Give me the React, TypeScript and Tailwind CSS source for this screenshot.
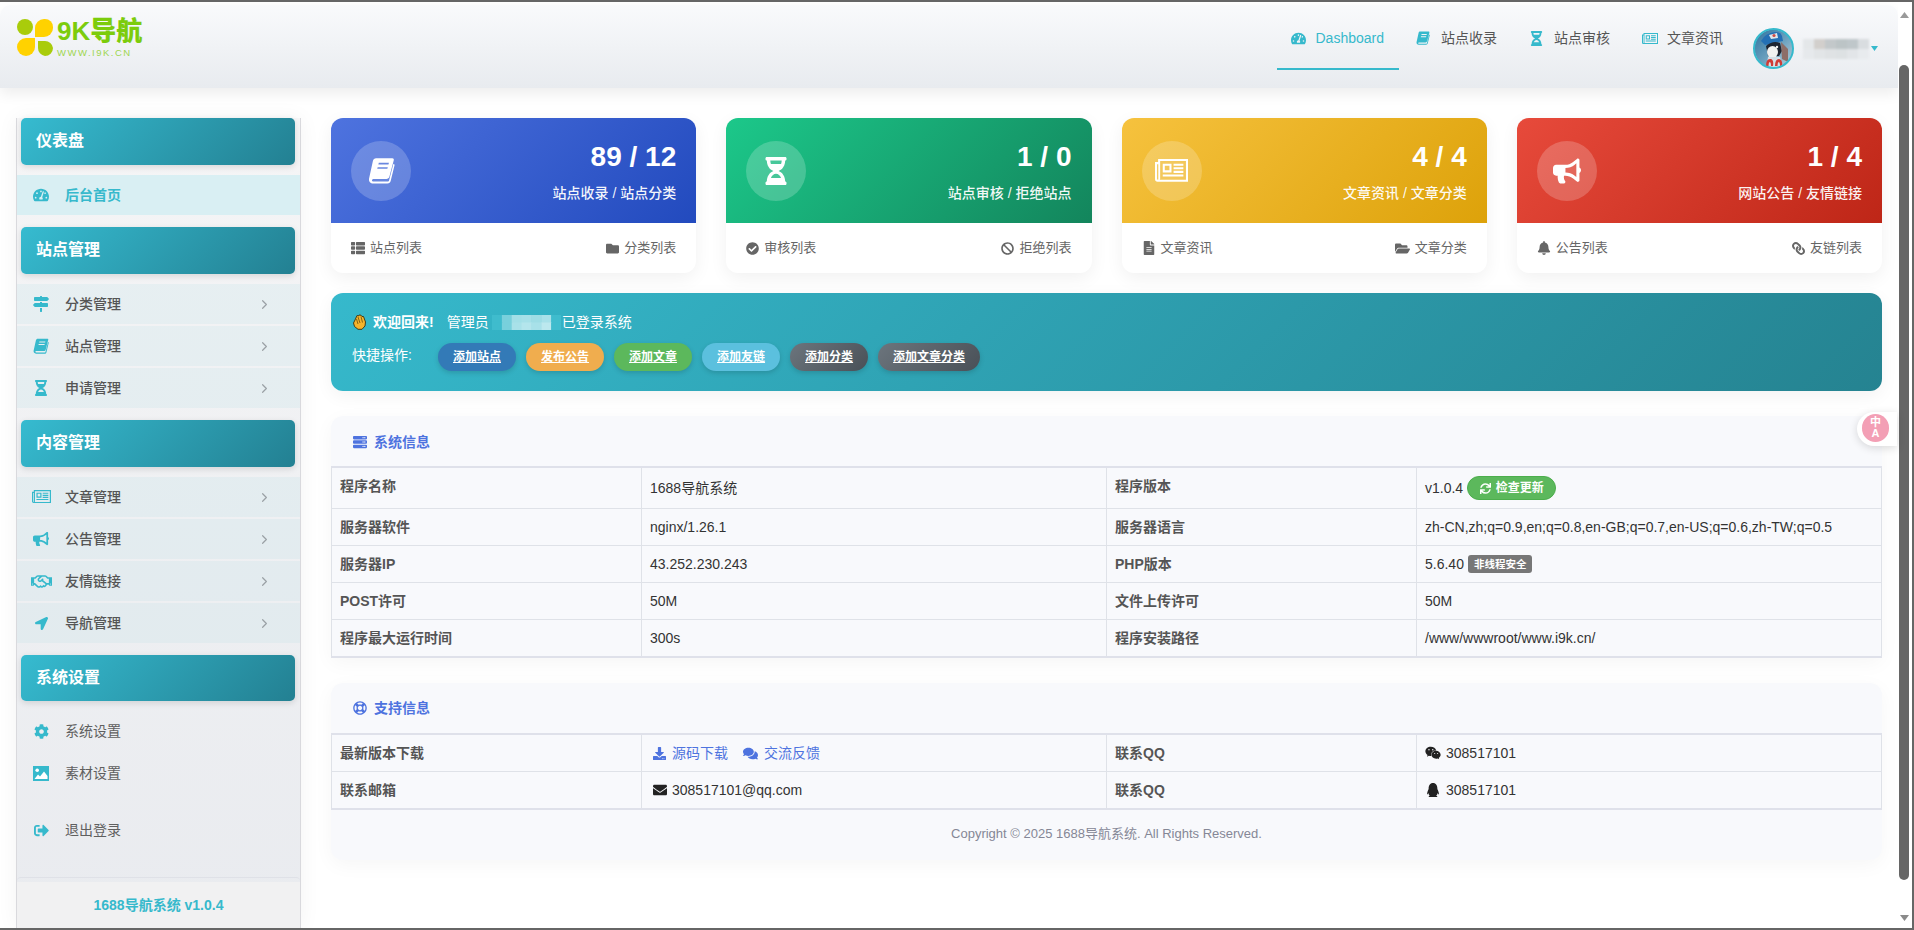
import React from "react";
import { ChevronRight } from "lucide-react";
import {
  FaTachometerAlt, FaMapSigns, FaHourglassHalf, FaBullhorn, FaRegHandshake, FaLocationArrow, FaCog,
  FaSignOutAlt, FaThList, FaFolder, FaCheckCircle, FaBan, FaFileAlt, FaFolderOpen, FaBell, FaLink, FaServer, FaRegLifeRing, FaSync,
  FaDownload, FaComments, FaEnvelope, FaWeixin, FaQq,
} from "react-icons/fa";

const Book = ({ size = 14, className = "" }: { size?: number; className?: string }) => (
  <svg viewBox="0 0 24 24" width={size} height={size} className={className} fill="currentColor" fillRule="evenodd">
    <path d="M7.2 1H21.6c1 0 1.6.8 1.3 1.8L19 17.6c-.4 1.3-1.3 1.9-2.6 1.9H5.4c-1.3 0-1.9.6-1.9 1.2 0 .7.6 1.1 1.6 1.1h12.4c.7 0 1-.2 1.2-.9L22.6 6l1.1.8-3.5 14.4c-.4 1.6-1.4 2.3-2.9 2.3H4.6C2.3 23.5.5 21.8.9 19.3L4.4 3.4C4.8 1.8 5.7 1 7.2 1ZM9.6 5.2l-.4 1.5h9l.4-1.5ZM8.6 9l-.4 1.5h9l.4-1.5Z" />
  </svg>
);

const News = ({ w = 16 }: { w?: number }) => (
  <svg viewBox="0 0 32 22" width={w} height={(w * 22) / 32} fill="currentColor" fillRule="evenodd">
    <path d="M3 0H32V22H2.5A2.5 2.5 0 0 1 0 19.5V3H3ZM5 2V19.5A1.5 1.5 0 0 1 4.6 20H30V2ZM2 5V19.5a.8.8 0 0 0 1.2.4V5ZM7.5 4.5H16V13H7.5ZM9.5 6.5V11H14V6.5ZM18 4.5H27.5V6.5H18ZM18 8H27.5V10H18ZM18 11.5H27.5V13.5H18ZM7.5 15H27.5V17H7.5Z" />
  </svg>
);

const Picture = () => (
  <svg viewBox="0 0 16 15" width={16} height={15}>
    <rect width="16" height="15" fill="#36b9cc" />
    <circle cx="4.2" cy="4.2" r="1.8" fill="#ffffff" />
    <path d="M1.5 13 L5 8.5 L7 10.5 L11 5.5 L14.5 10 V13 Z" fill="#ffffff" />
  </svg>
);

const Hand = () => (
  <svg viewBox="0 0 15 16" width={15} height={16} className="mr-[6px] shrink-0">
    <path d="M3 6 L5 1.5 L6.5 2 L7 1 L9 1.2 L10 2.5 L11.5 2.5 L13.5 8 L13 12 L10 15.3 L6 15.3 L2.5 12.5 L1.5 9 Z" fill="#f6b42c" stroke="#3d300c" strokeWidth="0.9" strokeLinejoin="round" />
    <path d="M6 3 L8 9 M9 2.6 L10.5 8.5 M4.5 5 L6 10" stroke="#6a4e0c" strokeWidth="0.8" fill="none" />
  </svg>
);

const Logo = () => (
  <div className="ml-[17px] mt-[14px] flex">
    <svg viewBox="0 0 36 37" width={36} height={37} className="shrink-0">
      <circle cx="8" cy="8" r="8" fill="#a9cc0b" />
      <path d="M18 9 a9 9 0 0 1 9-9 h1 a8 8 0 0 1 8 8 v1 a9 9 0 0 1-9 9 h-9 Z" fill="#ffd200" />
      <path d="M18 19 h-9 a9 9 0 0 0-9 9 a9 9 0 0 0 9 9 a9 9 0 0 0 9-9 Z" fill="#ffd200" />
      <path d="M21 22 h7 a8 8 0 0 1 8 7 a8 8 0 0 1-8 8 a8 8 0 0 1-7-8 Z" fill="#a9cc0b" />
    </svg>
    <div className="ml-[4px] -mt-[2px]">
      <div className="text-[26px] leading-[28px] font-black text-[#7ccc0c] whitespace-nowrap">9K导航</div>
      <div className="text-[9.5px] leading-[9px] mt-[3px] tracking-[1.5px] font-medium text-[#9ed650] whitespace-nowrap">WWW.I9K.CN</div>
    </div>
  </div>
);

const Avatar = () => (
  <svg viewBox="0 0 41 41" width={41} height={41} className="shrink-0">
    <defs>
      <clipPath id="av"><circle cx="20.5" cy="20.5" r="19" /></clipPath>
      <linearGradient id="avbg" x1="0" y1="0" x2="1" y2="1"><stop offset="0" stopColor="#2a6f9c" /><stop offset="0.55" stopColor="#6ea3c0" /><stop offset="1" stopColor="#c4d4dc" /></linearGradient>
    </defs>
    <g clipPath="url(#av)">
      <rect width="41" height="41" fill="url(#avbg)" />
      <path d="M8 13 Q12 5 22 4 Q28 4 29 8 L30 13 L12 17 Z" fill="#2470b4" />
      <path d="M16 7 L24 5 L25 10 L18 11 Z" fill="#dfe6ea" />
      <circle cx="21" cy="7.5" r="1.6" fill="#cf4a45" />
      <path d="M13 18 Q20 12 27 15 L29 23 L26 28 L15 28 Z" fill="#1d2430" />
      <ellipse cx="19.5" cy="24" rx="5.5" ry="6" fill="#f1f2f0" />
      <circle cx="24" cy="19" r="1.2" fill="#f1f2f0" />
      <path d="M13 41 L15 29 L27 29 L30 41 Z" fill="#d4dfe6" />
      <path d="M28 14 L35 21 L35 34 L29 31 Z" fill="#8d6e68" />
      <path d="M13 38 Q13 30 18 31 Q21 32 20 38 L18 38 Q18 34 16.5 34 Q15.5 35 15.5 38 Z M22 38 Q22 31 26 31 Q30 32 29 38 L27 38 Q27 34 25.5 34 Q24.5 35 24.5 38 Z" fill="#cf3b35" />
    </g>
    <circle cx="20.5" cy="20.5" r="19.5" fill="none" stroke="#36b9cc" strokeWidth="2" />
  </svg>
);

const Mosaic = ({ cols, w, h, className = "" }: { cols: string[][]; w: number; h: number; className?: string }) => {
  const cw = w / cols[0].length;
  const ch = h / cols.length;
  return (
    <svg width={w} height={h} className={`shrink-0 ${className}`}>
      {cols.map((row, y) => row.map((c, x) => <rect key={`${x}-${y}`} x={x * cw} y={y * ch} width={cw + 0.5} height={ch + 0.5} fill={c} />))}
    </svg>
  );
};

const NavItem = ({ icon, label, active }: { icon: React.ReactNode; label: string; active?: boolean }) => (
  <div className={`h-[65px] pl-[14px] pr-[15px] pt-[23px] flex items-start text-[14px] leading-[20px] ${active ? "border-b-2 border-[#36b9cc] text-[#36b9cc]" : "text-[#555555]"}`}>
    <span className="w-[25px] h-[20px] flex items-center text-[#36b9cc]">{icon}</span>
    <span>{label}</span>
  </div>
);

const SectionHead = ({ label, h = "h-[47px] pb-[2px]" }: { label: string; h?: string }) => (
  <div className={`${h} ml-[4px] mr-[5px] pl-[15px] flex items-center rounded-[5px] bg-[linear-gradient(135deg,#36bbd0,#238092)] text-white text-[16px] font-bold shadow-[0_2px_6px_rgba(0,0,0,0.12)]`}>{label}</div>
);

const SideItem = ({ icon, label, variant = "sub", chevron = true }: { icon: React.ReactNode; label: string; variant?: "active" | "sub" | "plain"; chevron?: boolean }) => (
  <div className={`h-[40px] pl-[12px] flex items-center text-[14px] ${variant === "active" ? "bg-[#d9eff3] text-[#36b9cc] font-bold" : variant === "sub" ? "bg-[#36b9cc]/[0.06] text-[#555555] font-medium" : "text-[#5f5f5f]"}`}>
    <span className="w-[24px] mr-[12px] flex justify-center text-[#36b9cc]">{icon}</span>
    <span>{label}</span>
    {chevron && <ChevronRight size={15} strokeWidth={1.9} className="ml-auto mr-[28px] text-[#9aa0a5]" />}
  </div>
);

const Sidebar = () => (
  <aside className="ml-[16px] mt-[30px] w-[285px] shrink-0 border-x border-[#d9d9dd] bg-gradient-to-b from-[#f5f5f6] to-[#e9ebef] flex flex-col shadow-[0_0_20px_rgba(0,0,0,0.05)]">
    <SectionHead label="仪表盘" />
    <div className="mt-[10px]"><SideItem icon={<FaTachometerAlt size={16} />} label="后台首页" variant="active" chevron={false} /></div>
    <div className="mt-[12px]"><SectionHead label="站点管理" /></div>
    <div className="mt-[10px] flex flex-col gap-[2px]">
      <SideItem icon={<FaMapSigns size={16} />} label="分类管理" />
      <SideItem icon={<Book size={16} />} label="站点管理" />
      <SideItem icon={<FaHourglassHalf size={16} />} label="申请管理" />
    </div>
    <div className="mt-[12px]"><SectionHead label="内容管理" /></div>
    <div className="mt-[10px] flex flex-col gap-[2px]">
      <SideItem icon={<News w={19} />} label="文章管理" />
      <SideItem icon={<FaBullhorn size={16} />} label="公告管理" />
      <SideItem icon={<FaRegHandshake size={21} />} label="友情链接" />
      <SideItem icon={<FaLocationArrow size={13} />} label="导航管理" />
    </div>
    <div className="mt-[12px]"><SectionHead label="系统设置" h="h-[46px]" /></div>
    <div className="mt-[10px] flex flex-col gap-[2px]">
      <SideItem icon={<FaCog size={15} />} label="系统设置" variant="plain" chevron={false} />
      <SideItem icon={<Picture />} label="素材设置" variant="plain" chevron={false} />
    </div>
    <div className="mt-[17px]"><SideItem icon={<FaSignOutAlt size={15} />} label="退出登录" variant="plain" chevron={false} /></div>
    <div className="mt-auto border-t border-[#dfe1e7] rounded-t-[4px] pt-[4px]">
      <div className="h-[46px] bg-[#f1f1f2] flex items-center justify-center text-[14px] font-bold text-[#36b9cc]">1688导航系统 v1.0.4</div>
    </div>
  </aside>
);

const StatCard = ({ gradient, icon, value, label, left, right }: { gradient: string; icon: React.ReactNode; value: string; label: string; left: [React.ReactNode, string]; right: [React.ReactNode, string] }) => (
  <div className="rounded-[12px] overflow-hidden bg-white shadow-[0_5px_18px_rgba(0,0,0,0.06)]">
    <div className={`h-[105px] px-[20px] flex items-center justify-between text-white ${gradient}`}>
      <div className="w-[60px] h-[60px] rounded-full bg-white/20 flex items-center justify-center">{icon}</div>
      <div className="text-right pt-[2px]">
        <div className="text-[28px] leading-[34px] font-bold">{value}</div>
        <div className="mt-[9px] text-[14px] leading-[20px] font-medium text-white/95">{label}</div>
      </div>
    </div>
    <div className="h-[50px] px-[20px] flex items-center justify-between text-[13px] text-[#666666]">
      <span className="flex items-center gap-[5px]">{left[0]}{left[1]}</span>
      <span className="flex items-center gap-[5px]">{right[0]}{right[1]}</span>
    </div>
  </div>
);

const QuickBtn = ({ label, cls }: { label: string; cls: string }) => (
  <span className={`h-[28px] px-[15px] rounded-full flex items-center text-[12px] font-bold text-white underline shadow-[0_2px_5px_rgba(0,0,0,0.15)] ${cls}`}>{label}</span>
);

const Label = ({ children, top }: { children: React.ReactNode; top?: boolean }) => (
  <td className={`border border-[#dfe2e8] px-[8px] py-[8px] text-[14px] leading-[20px] font-bold text-[#555555] ${top ? "align-top" : "align-middle"}`}>{children}</td>
);
const Val = ({ children }: { children: React.ReactNode }) => (
  <td className="border border-[#dfe2e8] px-[8px] py-[8px] text-[14px] leading-[20px] text-[#333333] align-middle">{children}</td>
);

const Table = ({ children }: { children: React.ReactNode }) => (
  <table className="w-full table-fixed border-collapse border-y-2 border-y-[#dfe1ea]">
    <colgroup>
      <col className="w-[20%]" />
      <col className="w-[30%]" />
      <col className="w-[20%]" />
      <col className="w-[30%]" />
    </colgroup>
    <tbody>{children}</tbody>
  </table>
);

const PanelHead = ({ icon, label, h }: { icon: React.ReactNode; label: string; h: string }) => (
  <div className={`${h} pl-[22px] flex items-center gap-[7px] text-[14px] font-bold text-[#4e73df]`}>{icon}{label}</div>
);

const Main = () => (
  <main className="ml-[30px] mt-[30px] w-[1551px] shrink-0">
    <div className="grid grid-cols-4 gap-[30px]">
      <StatCard gradient="bg-[linear-gradient(135deg,#4e73df,#224abe)]" icon={<Book size={27} />} value="89 / 12" label="站点收录 / 站点分类" left={[<FaThList size={14} />, "站点列表"]} right={[<FaFolder size={13} />, "分类列表"]} />
      <StatCard gradient="bg-[linear-gradient(135deg,#1cc88a,#13855c)]" icon={<FaHourglassHalf size={28} />} value="1 / 0" label="站点审核 / 拒绝站点" left={[<FaCheckCircle size={13} />, "审核列表"]} right={[<FaBan size={13} />, "拒绝列表"]} />
      <StatCard gradient="bg-[linear-gradient(135deg,#f6c23e,#dda20a)]" icon={<News w={33} />} value="4 / 4" label="文章资讯 / 文章分类" left={[<FaFileAlt size={14} />, "文章资讯"]} right={[<FaFolderOpen size={15} />, "文章分类"]} />
      <StatCard gradient="bg-[linear-gradient(135deg,#e74a3b,#be2617)]" icon={<FaBullhorn size={28} />} value="1 / 4" label="网站公告 / 友情链接" left={[<FaBell size={14} />, "公告列表"]} right={[<FaLink size={13} className="-scale-x-100" />, "友链列表"]} />
    </div>

    <div className="mt-[20px] h-[98px] rounded-[12px] bg-[linear-gradient(135deg,#36b9cc,#258391)] px-[21px] pt-[19px] text-white text-[14px] shadow-[0_5px_18px_rgba(0,0,0,0.05)]">
      <div className="h-[20px] flex items-center">
        <Hand />
        <span className="font-bold">欢迎回来!</span>
        <span className="ml-[13px]">管理员</span>
        <Mosaic className="ml-[3px] mr-[1px] blur-[0.7px]" w={69} h={15} cols={[["#3fbccd", "#78d0dc", "#a2dfe7", "#a6e0e8", "#9edde5", "#a8e1e9", "#3fbccd"], ["#3fbccd", "#78d0dc", "#a8e1e9", "#b4e5ec", "#a8e1e9", "#bce8ee", "#3fbccd"]]} />
        <span>已登录系统</span>
      </div>
      <div className="mt-[11px] flex items-center">
        <span className="w-[86px] mb-[4px]">快捷操作:</span>
        <div className="flex gap-[10px]">
          <QuickBtn label="添加站点" cls="bg-[#337ab7]" />
          <QuickBtn label="发布公告" cls="bg-[#f0ad4e]" />
          <QuickBtn label="添加文章" cls="bg-[#5cb85c]" />
          <QuickBtn label="添加友链" cls="bg-[#5bc0de]" />
          <QuickBtn label="添加分类" cls="bg-[linear-gradient(135deg,#6c757d,#495057)]" />
          <QuickBtn label="添加文章分类" cls="bg-[linear-gradient(135deg,#6c757d,#495057)]" />
        </div>
      </div>
    </div>

    <section className="mt-[25px] rounded-t-[12px] bg-[#f8f9fc] shadow-[0_5px_20px_rgba(0,0,0,0.04)]">
      <PanelHead h="h-[50px] pt-[2px]" icon={<FaServer size={14} />} label="系统信息" />
      <Table>
        <tr>
          <Label top>程序名称</Label><Val>1688导航系统</Val>
          <Label top>程序版本</Label>
          <Val>
            <span className="flex items-center">
              v1.0.4
              <span className="ml-[4px] h-[24px] w-[89px] rounded-full bg-[#5cb85c] border border-[#4cae4c] text-white text-[12px] font-bold flex items-center justify-center gap-[5px]"><FaSync size={11} />检查更新</span>
            </span>
          </Val>
        </tr>
        <tr><Label>服务器软件</Label><Val>nginx/1.26.1</Val><Label>服务器语言</Label><Val>zh-CN,zh;q=0.9,en;q=0.8,en-GB;q=0.7,en-US;q=0.6,zh-TW;q=0.5</Val></tr>
        <tr>
          <Label>服务器IP</Label><Val>43.252.230.243</Val><Label>PHP版本</Label>
          <Val>
            <span className="flex items-center">
              5.6.40
              <span className="ml-[4px] h-[18px] px-[6px] rounded-[3px] bg-[#777777] text-white text-[10.5px] leading-[18px] font-bold">非线程安全</span>
            </span>
          </Val>
        </tr>
        <tr><Label>POST许可</Label><Val>50M</Val><Label>文件上传许可</Label><Val>50M</Val></tr>
        <tr><Label>程序最大运行时间</Label><Val>300s</Val><Label>程序安装路径</Label><Val>/www/wwwroot/www.i9k.cn/</Val></tr>
      </Table>
    </section>

    <section className="mt-[25px] rounded-[12px] bg-[#f8f9fc] shadow-[0_5px_20px_rgba(0,0,0,0.04)]">
      <PanelHead h="h-[50px]" icon={<FaRegLifeRing size={14} />} label="支持信息" />
      <Table>
        <tr>
          <Label>最新版本下载</Label>
          <Val>
            <span className="flex items-center text-[#4e73df]">
              <FaDownload size={13} className="ml-[3px]" /><span className="ml-[6px]">源码下载</span>
              <FaComments size={15} className="ml-[15px]" /><span className="ml-[6px]">交流反馈</span>
            </span>
          </Val>
          <Label>联系QQ</Label>
          <Val><span className="flex items-center"><FaWeixin size={16} className="mr-[5px] text-[#222222]" />308517101</span></Val>
        </tr>
        <tr>
          <Label>联系邮箱</Label>
          <Val><span className="flex items-center"><FaEnvelope size={14} className="ml-[3px] mr-[5px] text-[#222222]" />308517101@qq.com</span></Val>
          <Label>联系QQ</Label>
          <Val><span className="flex items-center"><FaQq size={14} className="ml-[1px] mr-[6px] text-[#222222]" />308517101</span></Val>
        </tr>
      </Table>
      <div className="h-[50px] pb-[3px] flex items-center justify-center text-[13px] text-[#858796]">Copyright © 2025 1688导航系统. All Rights Reserved.</div>
    </section>
  </main>
);

const Scrollbar = () => (
  <div className="w-[14px] shrink-0 bg-white flex flex-col items-center pr-[2px] pt-[10px]">
    <svg width="9" height="6"><path d="M4.5 0 L9 6 H0 Z" fill="#9a9a9a" /></svg>
    <div className="w-[10px] h-[815px] mt-[47px] rounded-full bg-[#666666]" />
    <svg width="9" height="6" className="mt-[35px]"><path d="M0 0 H9 L4.5 6 Z" fill="#8a8a8a" /></svg>
  </div>
);

export default function App() {
  return (
    <div className="relative w-[1914px] h-[930px] overflow-hidden flex bg-white border-y-2 border-r-2 border-[#666666]" style={{ fontFamily: '"Liberation Sans", "Noto Sans CJK SC", sans-serif' }}>
      <div className="w-[1898px] shrink-0 flex flex-col">
        <header className="mt-[3px] h-[83px] shrink-0 rounded-t-[10px] bg-gradient-to-b from-[#f9fafc] to-[#e8ebef] shadow-[0_6px_14px_rgba(0,0,0,0.07)] flex items-start justify-between pr-[20px]">
          <Logo />
          <div className="flex items-start">
            <div className="flex gap-[3px]">
              <NavItem active icon={<FaTachometerAlt size={15} />} label="Dashboard" />
              <NavItem icon={<Book size={14} />} label="站点收录" />
              <NavItem icon={<FaHourglassHalf size={15} />} label="站点审核" />
              <NavItem icon={<News w={16} />} label="文章资讯" />
            </div>
            <div className="ml-[15px] mt-[23px] flex items-start">
              <Avatar />
              <Mosaic className="ml-[9px] mt-[11px] blur-[0.8px]" w={66} h={20} cols={[["#e4e7e9", "#d2cfcc", "#c3c8ca", "#bcc4c6", "#bfc7ca", "#d9dde0"], ["#e6e9ec", "#e2e5e7", "#dfe2e4", "#dde1e3", "#e2e5e8", "#e8ebee"]]} />
              <svg width="7" height="5" className="ml-[2px] mt-[18px]"><path d="M0 0 H7 L3.5 5 Z" fill="#36b9cc" /></svg>
            </div>
          </div>
        </header>
        <div className="flex flex-1 min-h-0">
          <Sidebar />
          <Main />
        </div>
      </div>
      <Scrollbar />
      <div className="absolute left-[1857px] top-[410px] w-[40px] h-[34px] rounded-l-[18px] bg-white shadow-[0_2px_8px_rgba(0,0,0,0.14)] pl-[5px] pt-[2px]">
        <div className="w-[27px] h-[28px] rounded-full bg-[#f39fb5] text-white text-[11px] leading-[11px] font-bold flex flex-col items-center justify-center">
          <span>中</span>
          <span>A</span>
        </div>
      </div>
    </div>
  );
}
